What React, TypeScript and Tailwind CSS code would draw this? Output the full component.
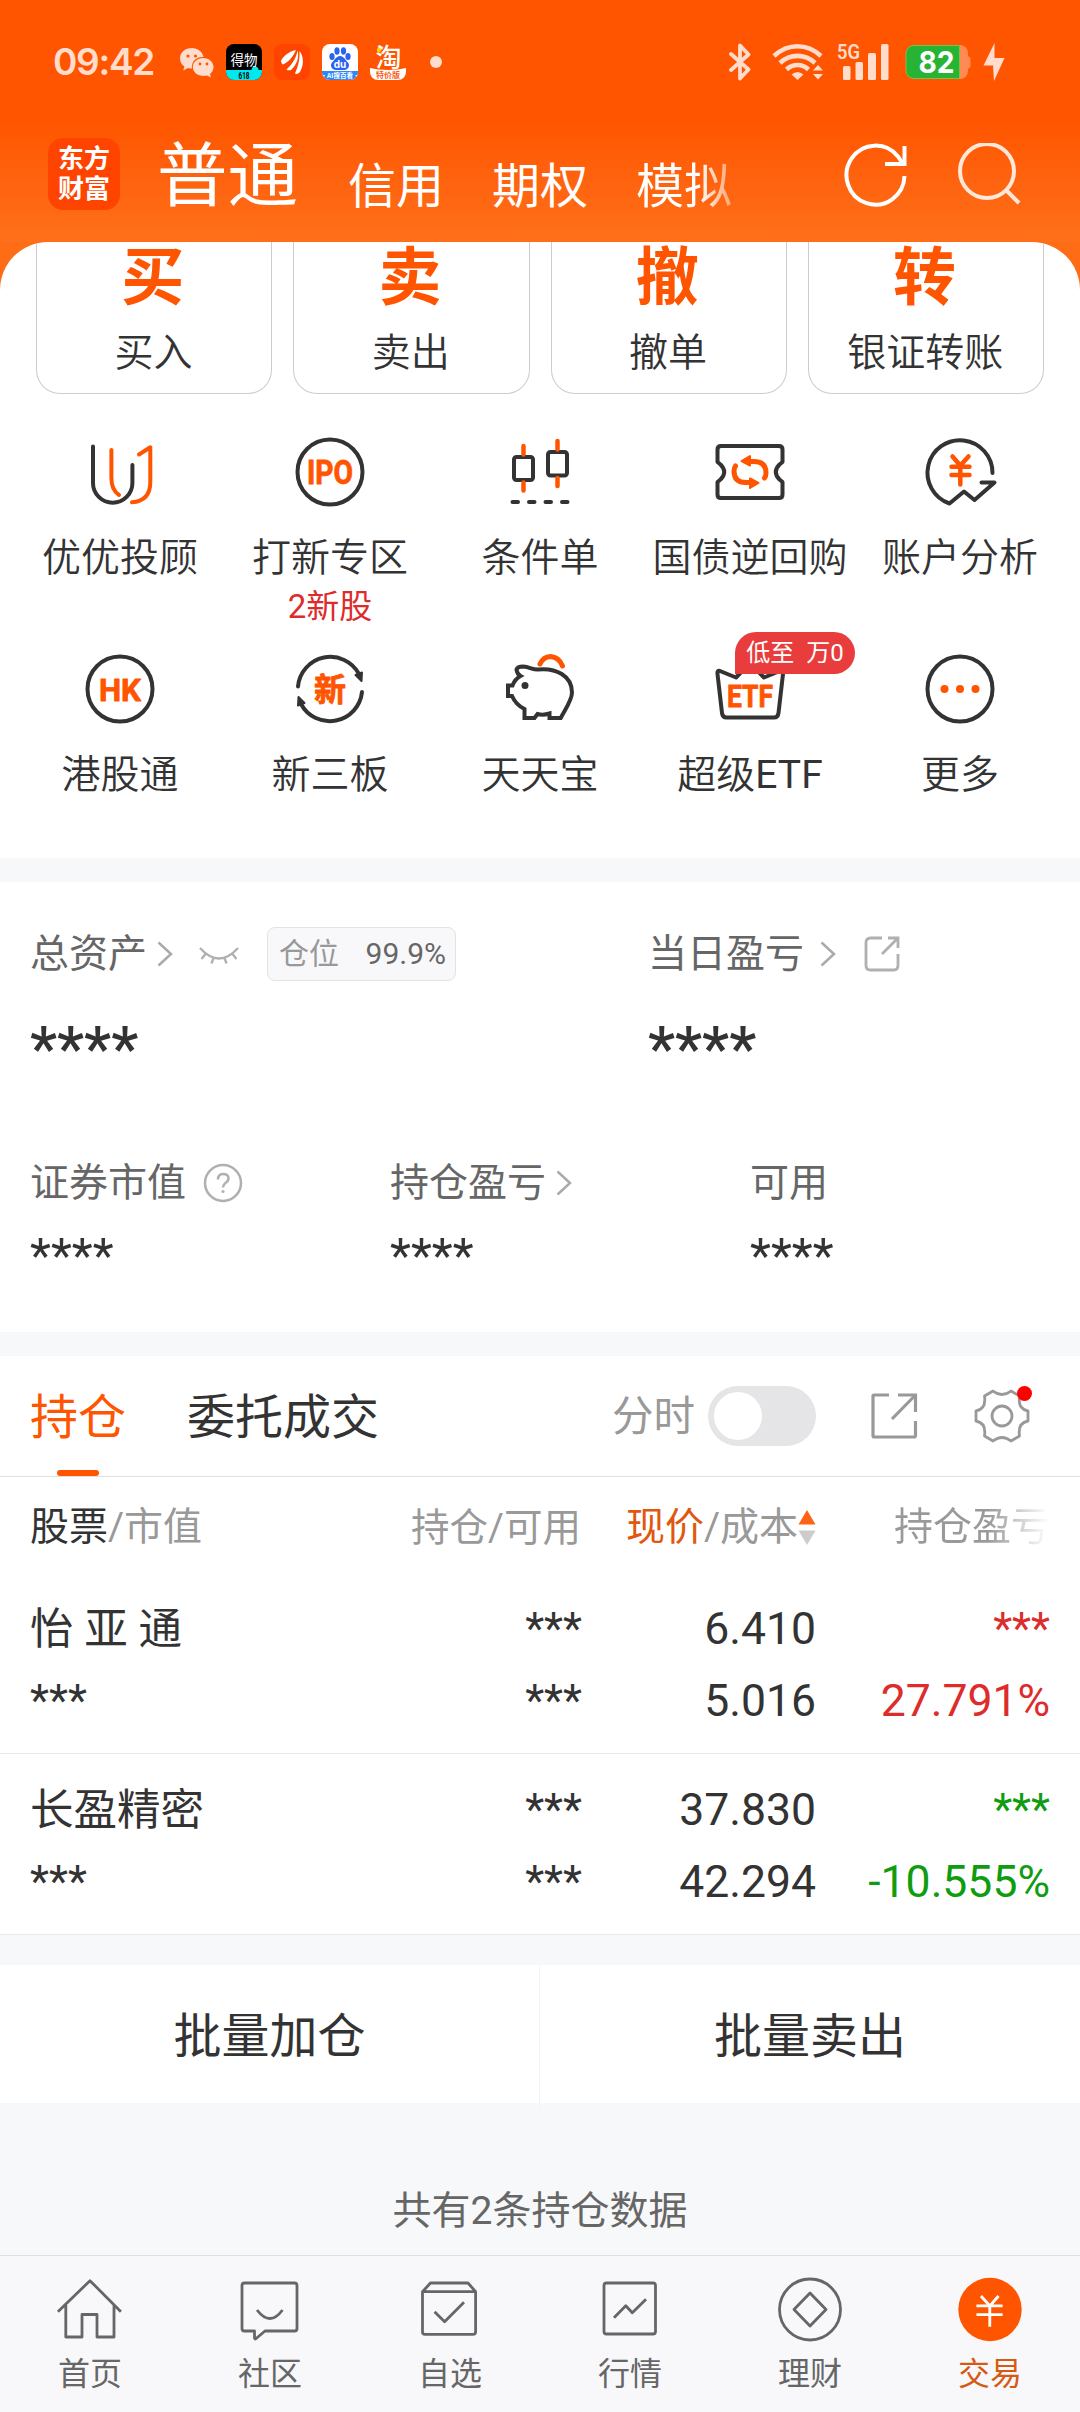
import React from "react";

const DARK = "#333333";
const ORANGE = "#ff5500";

/* ---------- status bar ---------- */

function StatusBar() {
  return (
    <div className="flex h-[124px] items-center pl-[52px] pr-[75px] text-[#ffdccc]">
      <span className="w-[128px] pl-px font-['Inter'] text-[37px] leading-[40px] font-semibold tracking-[-1.3px]">09:42</span>
      <svg width="34" height="30" viewBox="0 0 34 30" className="mt-[2px]">
        <path d="M12 0C5 0 0 4.600 0 10.500c0 3.400 1.700 6 4.300 8L3.300 22.500l4.700-2.500c1.300.4 2.600.5 4 .5C11 13 17 8.500 23.500 9 22.500 3.500 17.500 0 12 0z" fill="#ffdccc" />
        <path d="M23.500 10C17.500 10 12.800 14 12.800 19s4.700 9 10.700 9c1.200 0 2.400-.2 3.500-.5l4 2-1-3.500c2.300-1.700 3.500-4 3.500-7C33.500 14 29 10 23.500 10z" fill="#ffdccc" />
        <g fill={ORANGE}>
          <circle cx="8" cy="8" r="1.600" /><circle cx="15.500" cy="8" r="1.600" />
          <circle cx="20" cy="16" r="1.400" /><circle cx="27" cy="16" r="1.400" />
        </g>
      </svg>
      <div className="ml-3 flex gap-3">
        <svg width="36" height="36" viewBox="0 0 36 36">
          <clipPath id="r1"><rect width="36" height="36" rx="8" /></clipPath>
          <g clipPath="url(#r1)">
            <rect width="36" height="36" fill="#000" />
            <rect y="26" width="36" height="10" fill="#00e9ee" />
            <circle cx="29" cy="26" r="3.500" fill="#00e9ee" />
            <text x="18" y="20.500" textAnchor="middle" fill="#fff" fontSize="13.500" fontFamily="Noto Sans CJK SC">得物</text>
            <text x="18" y="34.500" textAnchor="middle" fill="#000" fontSize="9" fontWeight="700" fontFamily="Roboto" textLength="11" lengthAdjust="spacingAndGlyphs">618</text>
          </g>
        </svg>
        <svg width="36" height="36" viewBox="0 0 36 36">
          <rect width="36" height="36" rx="8" fill="#ff4400" />
          <g fill="#fff">
            <path d="M7 16.500C11 10 16 7.500 22 6 19 13 15 17.500 9 20.500 7.500 19.500 7 18 7 16.500z" />
            <path d="M12.500 25.500C19 19.500 22.500 13 23.500 6.500 25.500 14 22.500 21 17 26 15 26.500 13.500 26.500 12.500 25.500z" />
            <path d="M21 29.500C24.500 22 26 14 25.500 7 30 13 30 21 26 28 24 30 22.500 30.500 21 29.500z" />
          </g>
        </svg>
        <svg width="36" height="36" viewBox="0 0 36 36">
          <clipPath id="r3"><rect width="36" height="36" rx="8" /></clipPath>
          <g clipPath="url(#r3)">
            <rect width="36" height="36" fill="#fff" />
            <rect y="27" width="36" height="9" fill="#2f86f6" />
            <g fill="#2b62ee">
              <ellipse cx="10" cy="12.500" rx="2.600" ry="3.500" />
              <ellipse cx="15" cy="7" rx="2.600" ry="3.700" />
              <ellipse cx="21.500" cy="7" rx="2.600" ry="3.700" />
              <ellipse cx="26" cy="12.500" rx="2.600" ry="3.500" />
              <path d="M18 12c-4 0-5 4-8 6.500-2.500 3 0 7.500 4 7.500h8c4 0 6.500-4.500 4-7.500C23 16 22 12 18 12z" />
            </g>
            <text x="18" y="23.500" textAnchor="middle" fill="#fff" fontSize="10" fontWeight="700" fontFamily="Inter">du</text>
            <text x="18" y="34" textAnchor="middle" fill="#fff" fontSize="6.500" fontWeight="700" fontFamily="Noto Sans CJK SC">·AI搜百看·</text>
          </g>
        </svg>
        <svg width="36" height="36" viewBox="0 0 36 36" className="overflow-visible">
          <path d="M0 24C10 26.500 26 26.500 36 24v4a8 8 0 0 1-8 8H8a8 8 0 0 1-8-8z" fill="#fff" />
          <text x="18.500" y="22.500" textAnchor="middle" fill="#fff" fontSize="26" fontWeight="500" fontFamily="Noto Sans CJK SC">淘</text>
          <circle cx="9" cy="6" r="2.200" fill="#ffd500" />
          <text x="18" y="34" textAnchor="middle" fill="#ff5a10" fontSize="8" fontWeight="700" fontFamily="Noto Sans CJK SC">特价版</text>
        </svg>
      </div>
      <span className="ml-6 size-3 rounded-full bg-[#ffdccc]" />

      <div className="ml-auto flex items-center">
        <svg width="22" height="38" viewBox="0 0 22 38" fill="none" stroke="#ffdccc" strokeWidth="3.800" strokeLinejoin="round" strokeLinecap="round">
          <path d="M2 11l17.500 15.500-8.500 9V2.500L19.500 11.500 2 27" />
        </svg>
        <svg width="52" height="38" viewBox="0 0 52 38" className="ml-[21px]" fill="none" stroke="#ffdccc" strokeWidth="4.600">
          <path d="M2 13C16 0 35 0 49 13" />
          <path d="M8 20C18 10.500 33 10.500 43 20" />
          <path d="M14.500 26.500C21 20.500 30 20.500 36.500 26.500" />
          <path d="M19.500 31.500Q25.500 26.500 31.500 31.500L25.500 37z" fill="#ffdccc" stroke="none" />
          <path d="M41 27.500l5-5.500 5 5.500zM41 31l5 5.500 5-5.500z" fill="#ffdccc" stroke="none" />
        </svg>
        <svg width="54" height="38" viewBox="0 0 54 38" className="ml-[13px] overflow-visible" fill="#ffdccc">
          <text x="0" y="16" fontSize="21" fontWeight="600" fontFamily="Roboto" textLength="23" lengthAdjust="spacingAndGlyphs">5G</text>
          <rect x="6" y="23" width="7.500" height="14" rx="1.500" />
          <rect x="18.500" y="19" width="7.500" height="18" rx="1.500" />
          <rect x="31" y="10" width="8" height="27" rx="1.500" />
          <rect x="44" y="1" width="7.500" height="36" rx="1.500" />
        </svg>
        <svg width="66" height="36" viewBox="0 0 66 36" className="ml-[14px]">
          <path d="M54 1h1a8 8 0 0 1 8 8v3l2.500 2v9l-2.500 2v2a8 8 0 0 1-8 8h-1z" fill="#ff8b52" />
          <path d="M9 1.500h45.500v33H9a8 8 0 0 1-8-8v-17a8 8 0 0 1 8-8z" fill="#27b333" stroke="#7dc04c" strokeWidth="1" />
          <text x="31.500" y="29" textAnchor="middle" fill="#fff" fontSize="30.500" fontWeight="700" fontFamily="Inter" textLength="36" lengthAdjust="spacingAndGlyphs">82</text>
        </svg>
        <svg width="22" height="38" viewBox="0 0 22 38" className="ml-[12px]">
          <path d="M11.500 0L0.500 22.500H10L11 38 21.500 15H11.500z" fill="#ffdccc" />
        </svg>
      </div>
    </div>
  );
}

/* ---------- top navigation ---------- */

function TopNav() {
  return (
    <div className="flex h-[118px] items-start pl-12 text-white">
      <div className="mt-[14px] flex h-[72px] w-[72px] flex-col items-center justify-center rounded-[15px] bg-[#ff4400] text-[26px] leading-[30px] font-bold">
        <span>东方</span>
        <span>财富</span>
      </div>
      <span className="mt-[13px] ml-[37px] w-[143px] text-[70.500px] leading-[80px] whitespace-nowrap">普通</span>
      <div className="mt-[33px] ml-[48px] flex gap-12 text-[48px] leading-[60px]">
        <span>信用</span>
        <span>期权</span>
        <span className="bg-linear-to-r from-white from-65% to-white/40 bg-clip-text text-transparent">模拟</span>
      </div>
      <svg width="66" height="70" viewBox="0 0 66 70" className="mt-[17px] ml-[111px]" fill="none" stroke="#fff" strokeWidth="4">
        <path d="M61.500 35A29 29.500 0 1 1 55 15.500L60 23" />
        <path d="M61.500 5V23H42" />
      </svg>
      <svg width="66" height="66" viewBox="0 0 66 66" className="mt-[19px] ml-[47px]" fill="none" stroke="#ffe8da" strokeWidth="4">
        <circle cx="31" cy="28" r="27" />
        <path d="M50 47L63 60" />
      </svg>
    </div>
  );
}

/* ---------- quick actions ---------- */

const actions = [
  { glyph: "买", label: "买入" },
  { glyph: "卖", label: "卖出" },
  { glyph: "撤", label: "撤单" },
  { glyph: "转", label: "银证转账" },
];

function IconBox({ children }: { children: React.ReactNode }) {
  return (
    <svg width="80" height="80" viewBox="0 0 80 80" fill="none" stroke={DARK} strokeWidth="4" strokeLinecap="round" strokeLinejoin="round">
      {children}
    </svg>
  );
}

function IconWord({ children, y, size, length }: { children: string; y: number; size: number; length: number }) {
  return (
    <text x="40" y={y} textAnchor="middle" fill={ORANGE} stroke={ORANGE} strokeWidth="0.800" fontSize={size} fontWeight="700" fontFamily="Roboto, 'Noto Sans CJK SC'" textLength={length} lengthAdjust="spacingAndGlyphs">
      {children}
    </text>
  );
}

type Shortcut = {
  label: string;
  latin?: string;
  note?: string;
  badge?: string;
  icon: React.ReactNode;
};

const shortcuts: Shortcut[] = [
  {
    label: "优优投顾",
    icon: (
      <IconBox>
        <path d="M13 14.500V51a19.700 19.700 0 0 0 39.400 0V33" />
        <g stroke={ORANGE}>
          <path d="M31.400 18v28q0 12 7.600 17" />
          <path d="M59 22.500L70.300 15.300V50q0 19-18.300 20.300" />
        </g>
      </IconBox>
    ),
  },
  {
    label: "打新专区",
    note: "2新股",
    icon: (
      <IconBox>
        <circle cx="40" cy="40" r="32.500" />
        <IconWord y={51.500} size={33} length={46}>IPO</IconWord>
      </IconBox>
    ),
  },
  {
    label: "条件单",
    icon: (
      <IconBox>
        <rect x="14" y="25" width="19" height="23" rx="2.500" />
        <rect x="48" y="20" width="19" height="23.500" rx="2.500" />
        <path d="M23.500 14v8.500M23.500 50.500v8M57.500 9v8.500M57.500 46v8" stroke={ORANGE} strokeWidth="4.500" />
        <path d="M12.500 70h5.500M29 70h5.500M45.500 70h5.500M62 70h5.500" />
      </IconBox>
    ),
  },
  {
    label: "国债逆回购",
    icon: (
      <IconBox>
        <path d="M11 14h58q3.500 0 3.500 3.500V30l-3 2.500Q62 40 69.500 47.500l3 2.500v12.500q0 3.500-3.500 3.500H11q-3.500 0-3.500-3.500V50l3-2.500Q18 40 10.500 32.500l-3-2.500V17.500Q7.500 14 11 14z" />
        <g stroke={ORANGE} strokeWidth="5">
          <path d="M38 29.500h6Q56 29.500 56 41q0 3-1.500 5" />
          <path d="M31.500 29l8.500-5v9.500z" strokeWidth="2" fill={ORANGE} />
          <path d="M42 50.500h-6Q24 50.500 24 39q0-3 1.500-5" />
          <path d="M48.500 51L40 56v-9.500z" strokeWidth="2" fill={ORANGE} />
        </g>
      </IconBox>
    ),
  },
  {
    label: "账户分析",
    icon: (
      <IconBox>
        <path d="M72.500 41A32.500 32.500 0 1 0 29.500 71.500L44 59.500 54.500 68 74.500 50.500H61.500" />
        <path d="M32.500 24.500L40.300 33.500 48.500 24.500M40.300 33.500V52.500M31.500 34.700H49.500M31.500 43H49.500" stroke={ORANGE} strokeWidth="4.500" />
      </IconBox>
    ),
  },
  {
    label: "港股通",
    icon: (
      <IconBox>
        <circle cx="40" cy="40" r="32.500" />
        <IconWord y={51.500} size={32} length={42}>HK</IconWord>
      </IconBox>
    ),
  },
  {
    label: "新三板",
    icon: (
      <IconBox>
        <path d="M8 37.500A32.500 32.500 0 0 1 69 25" />
        <path d="M72 43A32.500 32.500 0 0 1 11 55" />
        <path d="M71.500 32l-6-6 6.500-2.500zM8.500 48l6 6-6.500 2.500z" strokeWidth="2" fill={DARK} />
        <IconWord y={51.500} size={32} length={32}>新</IconWord>
      </IconBox>
    ),
  },
  {
    label: "天天宝",
    icon: (
      <IconBox>
        <path d="M16.500 20.500Q17.500 17.500 23 17.500C30 18 33 21 38 20.500 56 18.500 72 27 72 43.500 72 51 66 59 60.700 69H49.500V64.500Q43 66.500 37.500 65L34.500 69H24.500V60Q16 56 12 47H8V36.500H12.500Q15 30 20.500 27 17 25 16.500 20.500z" strokeLinejoin="miter" />
        <circle cx="25" cy="36.500" r="3.500" fill={DARK} stroke="none" />
        <path d="M40 15Q43 8 50.500 7.500 59 8 62.500 17" stroke={ORANGE} strokeWidth="5" />
      </IconBox>
    ),
  },
  {
    label: "超级",
    latin: "ETF",
    badge: "低至  万0",
    icon: (
      <IconBox>
        <path d="M10 22L26 28.500 40 14 54 28.500 70 22Q73.500 21 73 25L68.500 64Q68 68.500 64 68.500H16.500Q12.500 68.500 12 64L7.500 25Q7 21 10 22z" />
        <IconWord y={57.500} size={32} length={46}>ETF</IconWord>
      </IconBox>
    ),
  },
  {
    label: "更多",
    icon: (
      <IconBox>
        <circle cx="40" cy="40" r="32.500" />
        <g fill={ORANGE} stroke="none">
          <circle cx="24.500" cy="40" r="4" /><circle cx="40" cy="40" r="4" /><circle cx="55.500" cy="40" r="4" />
        </g>
      </IconBox>
    ),
  },
];

function QuickPanel() {
  return (
    <div className="bg-[#ff6c16]">
      <section className="h-[616px] overflow-hidden rounded-t-[48px] bg-white px-[15px]">
        <div className="grid grid-cols-4 gap-[21px] px-[21px]">
          {actions.map((a) => (
            <div key={a.label} className="flex h-[152px] flex-col items-center rounded-b-3xl border border-t-0 border-[#cccccc]">
              <span className="-ml-[3px] text-[63px] leading-[72px] font-bold text-[#ff5500]">{a.glyph}</span>
              <span className="-ml-px text-[39px] leading-[78px] font-[350]">{a.label}</span>
            </div>
          ))}
        </div>
        <div className="mt-[38px] grid grid-cols-5">
          {shortcuts.map((s) => (
            <div key={s.label} className="relative flex h-[217px] flex-col items-center">
              {s.icon}
              <span className="mt-[15px] text-[39px] leading-[63px] font-[350] whitespace-nowrap">
                {s.label}
                {s.latin && <span className="font-normal">{s.latin}</span>}
              </span>
              {s.note && <span className="-mt-[2px] text-[33px] leading-[38px] text-[#dd2c2c]">{s.note}</span>}
              {s.badge && (
                <span className="absolute -top-[17px] left-[90px] h-[42px] w-[120px] rounded-[21px] rounded-bl-none bg-[#e93c3c] text-center text-[24px] leading-[42px] whitespace-pre text-white">
                  {s.badge}
                </span>
              )}
            </div>
          ))}
        </div>
      </section>
    </div>
  );
}

/* ---------- assets ---------- */

function Chevron({ className }: { className: string }) {
  return (
    <svg width="16" height="26" viewBox="0 0 16 26" className={className} fill="none" stroke="#aaaaaa" strokeWidth="2.500">
      <path d="M1.500 1.500L14 13 1.500 24.500" />
    </svg>
  );
}

function Assets() {
  return (
    <section className="h-[450px] bg-white px-[30px] pt-[45px] text-[39px] text-[#666666]">
      <div className="flex h-[54px] items-center leading-[54px]">
        <div className="flex w-[618px] items-center">
          <span>总资产</span>
          <Chevron className="ml-[10px]" />
          <svg width="42" height="20" viewBox="0 0 42 20" className="ml-[25px] mt-[4px]" fill="none" stroke="#b0b0b0" strokeWidth="2.300">
            <path d="M2 2Q21 23 40 2M7.500 8L3.500 13M15.500 12L13.500 17.500M26.500 12L28.500 17.500M34.500 8L38.500 13" />
          </svg>
          <div className="ml-[27px] flex h-[54px] w-[189px] items-center justify-between rounded-lg border border-[#e2e3e5] bg-[#f8f8fb] pr-[9px] pl-[11px] text-[30px]">
            <span className="text-[#999999]">仓位</span>
            <span>99.9%</span>
          </div>
        </div>
        <span>当日盈亏</span>
        <Chevron className="ml-[16px]" />
        <svg width="36" height="36" viewBox="0 0 36 36" className="ml-[28px]" fill="none" stroke="#b0b0b0" strokeWidth="2.800">
          <path d="M18 2H6.500Q2 2 2 6.500V29.500Q2 34 6.500 34H29.500Q34 34 34 29.500V18M24 2H34V12M34 2L18 18" />
        </svg>
      </div>
      <div className="mt-[38px] flex text-[61px] leading-[60px] font-medium text-[#333333]">
        <span className="w-[618px]">****</span>
        <span>****</span>
      </div>
      <div className="mt-[84px] grid grid-cols-[360px_360px_1fr] leading-[40px]">
        <div className="flex items-center">
          <span>证券市值</span>
          <svg width="40" height="40" viewBox="0 0 40 40" className="ml-[17px]" fill="none" stroke="#b0b0b0" strokeWidth="2.500">
            <circle cx="20" cy="20" r="18" />
            <path d="M15 16.500Q15 11 20 11 25.500 11 25.500 15.500 25.500 18 22.500 20 20 21.800 20 24.500" />
            <circle cx="20" cy="28.500" r="1.600" fill="#b0b0b0" stroke="none" />
          </svg>
        </div>
        <div className="flex items-center">
          <span>持仓盈亏</span>
          <Chevron className="ml-[10px]" />
        </div>
        <span>可用</span>
      </div>
      <div className="mt-[28px] grid grid-cols-[360px_360px_1fr] text-[48.500px] leading-[50px] text-[#333333]">
        <span>****</span>
        <span>****</span>
        <span>****</span>
      </div>
    </section>
  );
}

/* ---------- holdings ---------- */

function HoldingTabs() {
  return (
    <div className="flex h-[121px] items-center border-b border-[#dedfe1] pl-[30px] text-[48px]">
      <div className="relative flex h-full items-center pt-[3px] text-[#ff5500]">
        <span>持仓</span>
        <span className="absolute bottom-0 left-[27px] h-[6px] w-[42px] rounded-full bg-[#ff5500]" />
      </div>
      <span className="ml-[61px] pt-[3px]">委托成交</span>
      <span className="ml-[233px] pt-[3px] text-[41.500px] text-[#999999]">分时</span>
      <div className="ml-[13px] flex h-[60px] w-[108px] items-center rounded-full bg-[#e5e5e7] pl-[6px]">
        <span className="size-12 rounded-full bg-white" />
      </div>
      <svg width="48" height="48" viewBox="0 0 48 48" className="ml-[54px]" fill="none" stroke="#999999" strokeWidth="3.200">
        <path d="M19 3H4Q3 3 3 4V43.500Q3 45 4 45H44Q45.500 45 45.500 43.500V29M28 3H45.500V20M45 3.500L22 27" />
      </svg>
      <div className="relative ml-[54px] size-[60px]">
        <svg width="60" height="60" viewBox="-30 -30 60 60" fill="none" stroke="#999999" strokeWidth="2.800" strokeLinejoin="round">
          <path d="M-9-25Q0-18 9-25L17.500-20Q15.500-7 26-5V5Q15.500 7 17.500 20L9 25Q0 18-9 25L-17.500 20Q-15.500 7-26 5V-5Q-15.500-7-17.500-20Z" />
          <circle r="10" />
        </svg>
        <span className="absolute top-0 right-0 size-[15px] rounded-full bg-[#ff0000]" />
      </div>
    </div>
  );
}

const holdings = [
  { name: "怡 亚 通", price: "6.410", cost: "5.016", rate: "27.791%", tone: "text-[#dd2c2c]" },
  { name: "长盈精密", price: "37.830", cost: "42.294", rate: "-10.555%", tone: "text-[#109c10]" },
];

function Holdings() {
  return (
    <section className="bg-white">
      <HoldingTabs />
      <div className="grid h-[96px] grid-cols-[330px_221px_235px_1fr] items-center pt-[5px] pl-[30px] text-[39px] text-[#999999]">
        <span><span className="text-[#333333]">股票</span>/市值</span>
        <span className="text-right text-[38.500px]">持仓/可用</span>
        <span className="flex items-center justify-end">
          <span className="text-[#e0580f]">现价</span>/成本
          <svg width="18" height="36" viewBox="0 0 18 36">
            <path d="M9 0L17.500 14.500H0.500z" fill="#fa6414" />
            <path d="M9 35L17.500 20.500H0.500z" fill="#cccccc" />
          </svg>
        </span>
        <span className="ml-[78px] w-[156px] bg-linear-to-r from-[#999999] from-60% to-[#999999]/5 to-97% bg-clip-text whitespace-nowrap text-transparent">持仓盈亏</span>
      </div>
      {holdings.map((h) => (
        <div key={h.name} className="grid h-[181px] grid-cols-[320px_232px_234px_234px] grid-rows-[72px_72px] border-b border-[#e8e9eb] pt-[19px] pl-[30px] text-right text-[44px] leading-[75px]">
          <span className="text-left text-[43.500px]">{h.name}</span>
          <span>***</span>
          <span className="text-[44.500px]">{h.price}</span>
          <span className={h.tone}>***</span>
          <span className="text-left">***</span>
          <span>***</span>
          <span className="text-[44.500px]">{h.cost}</span>
          <span className={`text-[44.500px] ${h.tone}`}>{h.rate}</span>
        </div>
      ))}
    </section>
  );
}

/* ---------- bottom bar ---------- */

const tabs = [
  { label: "首页", icon: <path d="M2.900 36.700L35 5.700 65.900 36.700M10.800 30V62H27V39.500H42V62H59V30" /> },
  { label: "社区", icon: <><path d="M9.500 8H59.500Q62 8 62 10.500V53.500Q62 56 59.500 56H30L20.500 64Q19.500 64 19.500 63V56H9.500Q7 56 7 53.500V10.500Q7 8 9.500 8z" /><path d="M22 35Q35 52 47.500 35" /></> },
  { label: "自选", icon: <><path d="M7.500 16.700H60.600V57Q60.600 59.300 58 59.300H10Q7.500 59.300 7.500 57zL15.500 8H53L60.600 16.700" /><path d="M19.600 36.700L29.600 46.700 49 27.300" /></> },
  { label: "行情", icon: <><rect x="9" y="8" width="51.500" height="51" rx="2.500" /><path d="M19 42.700L30.800 30.700 37.300 37.700 51 24.300" /></> },
  { label: "理财", icon: <><circle cx="35" cy="34.500" r="30.500" /><path d="M35 18L51 34.500 35 51 19 34.500z" /></> },
  {
    label: "交易",
    active: true,
    icon: <><circle cx="35" cy="34.500" r="31.700" fill={ORANGE} stroke="none" /><path d="M26 21L34.800 31 43.500 21M34.800 31V51.700M21.400 30.800H47.600M21.400 39.700H47.600" stroke="#fff" /></>,
  },
];

function BottomBar() {
  return (
    <nav className="grid h-[157px] grid-cols-6 border-t border-[#dde0e2] bg-[#f8f8fb] pt-[19px]">
      {tabs.map((t) => (
        <div key={t.label} className="flex flex-col items-center">
          <svg width="70" height="70" viewBox="0 0 70 70" fill="none" stroke="#666666" strokeWidth="2.800" strokeLinejoin="round">
            {t.icon}
          </svg>
          <span className={`mt-[8px] text-[32px] leading-[42px] ${t.active ? "text-[#d75a14]" : "text-[#666666]"}`}>{t.label}</span>
        </div>
      ))}
    </nav>
  );
}

export default function App() {
  return (
    <div className="flex h-[2412px] w-[1080px] flex-col overflow-hidden bg-[#f7f8fa] font-[Roboto,'Noto_Sans_CJK_SC',sans-serif] text-[#333333]">
      <header className="h-[242px] bg-linear-to-b from-[#ff5500] from-50% to-[#ff6e18] to-97%">
        <StatusBar />
        <TopNav />
      </header>
      <QuickPanel />
      <div className="mt-6">
        <Assets />
      </div>
      <div className="mt-6">
        <Holdings />
      </div>
      <div className="mt-[30px] grid h-[138px] grid-cols-2 bg-white text-center text-[48px] leading-[143px]">
        <span className="border-r border-[#f4f4f6]">批量加仓</span>
        <span>批量卖出</span>
      </div>
      <p className="mt-auto mb-[22px] text-center text-[39px] leading-[44px] text-[#666666]">共有2条持仓数据</p>
      <BottomBar />
    </div>
  );
}
